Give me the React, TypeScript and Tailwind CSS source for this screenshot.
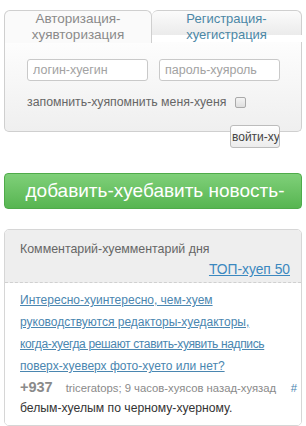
import React, { useState } from "react";

const font = { fontFamily: '"Liberation Sans", Arial, sans-serif' };

const LoginBox: React.FC = () => {
  const [tab, setTab] = useState<"login" | "register">("login");
  const [remember, setRemember] = useState(false);

  return (
    <div className="px-[4px] pt-[10px]">
      {/* tabs */}
      <div className="flex h-[32px] items-start">
        <button
          onClick={() => setTab("login")}
          className={`relative z-10 h-[33px] w-[148px] rounded-t-[6px] border border-b-0 border-[#cfcfcf] bg-[#fafafa] text-[13.5px] leading-[16px] text-[#8a8a8a] ${
            tab === "login" ? "" : ""
          }`}
        >
          <span className="block">Авторизация-</span>
          <span className="block">хуявторизация</span>
        </button>
        <button
          onClick={() => setTab("register")}
          className="relative z-20 h-[25px] flex-1 rounded-t-[6px] border border-b-0 border-l-0 border-[#cfcfcf] bg-gradient-to-b from-[#fbfbfb] to-[#ebebeb] text-[13px] leading-[16px] text-[#4b87a6]"
        >
          <span className="block">Регистрация-</span>
          <span className="block">хуегистрация</span>
        </button>
      </div>

      {/* form */}
      <div className="relative h-[90px] rounded-b-[5px] border border-t-0 border-[#cfcfcf] bg-gradient-to-b from-[#fdfdfd] to-[#efefef]">
        <div className="flex gap-[11px] pl-[22px] pt-[17px]">
          <input
            placeholder="логин-хуегин"
            className="h-[22px] w-[121px] rounded-[3px] border border-[#c9c9c9] bg-white px-[5px] text-[12.5px] text-[#555] placeholder:text-[#a2a2a2] focus:outline-none"
          />
          <input
            type="password"
            placeholder="пароль-хуяроль"
            className="h-[22px] w-[121px] rounded-[3px] border border-[#c9c9c9] bg-white px-[5px] text-[12.5px] text-[#555] placeholder:text-[#a2a2a2] focus:outline-none"
          />
        </div>
        <label className="mt-[12px] flex items-center pl-[22px] text-[12.3px] text-[#666]">
          запомнить-хуяпомнить меня-хуеня
          <span
            onClick={() => setRemember(!remember)}
            className={`ml-[9px] inline-block h-[11px] w-[11px] rounded-[2px] border border-[#a9a9a9] ${
              remember ? "bg-[#4b87a6]" : "bg-gradient-to-b from-[#f4f4f4] to-[#dedede]"
            }`}
          />
        </label>
        <button className="absolute left-[225px] top-[83px] h-[23px] w-[50px] overflow-hidden whitespace-nowrap rounded-[3px] border border-[#bcbcbc] bg-gradient-to-b from-white to-[#ececec] pl-[1px] text-left text-[12px] text-[#444]">
          войти-хуйти
        </button>
      </div>
    </div>
  );
};

const CommentOfDay: React.FC = () => (
  <div className="mx-[4px] mt-[20px] overflow-hidden rounded-[5px] border border-[#d6d6d6]">
    <div className="h-[53px] border-b border-dashed border-[#d0d0d0] bg-[#eeeeee] px-[15px] pt-[9px]">
      <div className="text-[12.4px] leading-[20px] text-[#666]">Комментарий-хуемментарий дня</div>
      <div className="-mr-[4px] text-right text-[13.8px] leading-[22px]">
        <a href="#" className="text-[#3b88bf] underline">
          ТОП-хуеп 50
        </a>
      </div>
    </div>
    <div className="bg-white px-[15px] pb-[6px] pt-[6px]">
      <a href="#" className="block whitespace-nowrap text-[12px] leading-[22px] text-[#4a86b0] underline">
        Интересно-хуинтересно, чем-хуем
        <br />
        руководствуются редакторы-хуедакторы,
        <br />
        <span className="tracking-[-0.35px]">когда-хуегда решают ставить-хуявить надпись</span>
        <br />
        поверх-хуеверх фото-хуето или нет?
      </a>
      <div className="-mr-[11px] flex items-baseline whitespace-nowrap text-[#8a8a8a]">
        <span className="text-[14.5px] font-bold leading-[20px]">+937</span>
        <span className="ml-[13px] text-[11.3px]">triceratops; 9 часов-хуясов назад-хуязад</span>
        <span className="ml-auto text-[11.3px] text-[#4a86b0]">#</span>
      </div>
      <div className="text-[12.2px] leading-[22px] text-[#333]">белым-хуелым по черному-хуерному.</div>
    </div>
  </div>
);

export default function App() {
  return (
    <div className="h-[426px] w-[306px] overflow-hidden bg-white" style={font}>
      <LoginBox />
      <div className="px-[4px] pt-[41px]">
        <button className="h-[36px] w-full rounded-[4px] border border-[#4fab4a] bg-gradient-to-b from-[#7fd079] to-[#57b551] pl-[4px] text-[19px] text-white">
          добавить-хуебавить новость-
        </button>
      </div>
      <CommentOfDay />
    </div>
  );
}
